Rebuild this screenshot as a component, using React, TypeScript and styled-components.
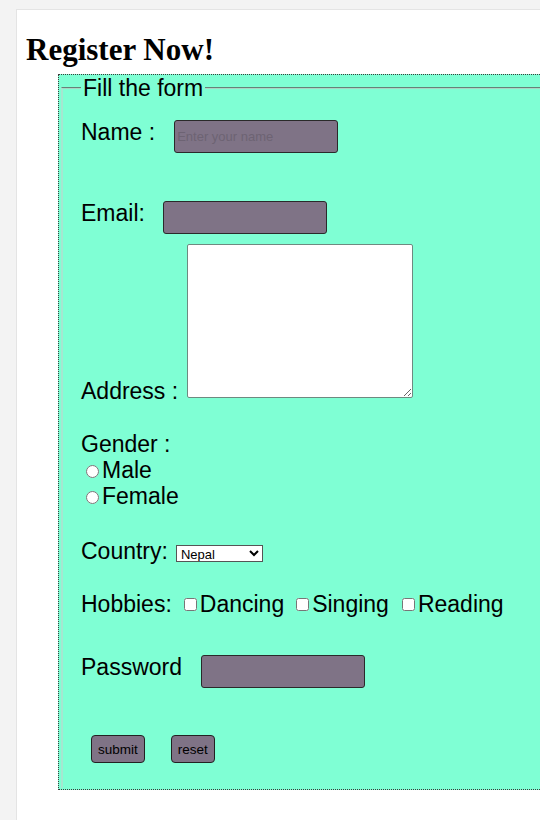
import React from "react";
import styled, { createGlobalStyle } from "styled-components";

const GlobalStyle = createGlobalStyle`
  html, body {
    margin: 0;
    padding: 0;
    overflow: hidden;
    background: #f3f3f3;
  }
`;

const Page = styled.div`
  padding: 9px 0 0 16px;
`;

const Card = styled.div`
  background: #ffffff;
  border-top: 1px solid #e4e4e4;
  border-left: 1px solid #e4e4e4;
  min-height: 900px;
  padding: 22px 0 0 9px;
`;

const Title = styled.h1`
  margin: 0;
  font-family: "Liberation Serif", "Times New Roman", serif;
  font-weight: bold;
  font-size: 31px;
  line-height: 36px;
  color: #000;
`;

const Form = styled.form`
  margin: 6px 0 0 32px;
  width: 540px;
  background: #7fffd4;
  border: 1px dotted #3a3a3a;
  font-family: "Liberation Sans", Arial, sans-serif;
  font-size: 23px;
  color: #000;
`;

const Fieldset = styled.fieldset`
  margin: 0 2px;
  border-style: solid;
  border-width: 2px;
  border-color: #95c9b7 #7fffd4 #7fffd4 #a6e6d0;
  border-top-style: groove;
  border-top-color: #a9d6c6;
  padding: 0 0 24px 18px;
  min-width: 0;
`;

const Legend = styled.legend`
  padding: 0 2px;
  line-height: 26px;
  font-size: 23px;
`;

const Row = styled.div<{ $mt: number; $align?: string }>`
  display: flex;
  align-items: ${(p) => p.$align ?? "flex-start"};
  margin-top: ${(p) => p.$mt}px;
`;

const Label = styled.label`
  line-height: 26px;
  white-space: nowrap;
`;

const TextInput = styled.input<{ $ml: number }>`
  box-sizing: border-box;
  width: 164px;
  height: 33px;
  margin: 1px 0 0 ${(p) => p.$ml}px;
  padding: 0 2px;
  background: #7f7386;
  border: 1px solid #2a2a2a;
  border-radius: 3px;
  font-family: "Liberation Sans", Arial, sans-serif;
  font-size: 13px;
  color: #000;
  &::placeholder {
    color: #6d6373;
  }
`;

const TextArea = styled.textarea`
  box-sizing: border-box;
  width: 226px;
  height: 154px;
  margin: 0 0 6px 9px;
  background: #ffffff;
  border: 1px solid #6e8a80;
  border-radius: 2px;
`;

const Stack = styled.div<{ $mt: number }>`
  display: flex;
  flex-direction: column;
  margin-top: ${(p) => p.$mt}px;
`;

const Option = styled.label`
  display: flex;
  align-items: center;
  line-height: 26px;
`;

const Radio = styled.input`
  width: 13px;
  height: 13px;
  margin: 2px 3px 0 5px;
`;

const Select = styled.select`
  box-sizing: border-box;
  width: 87px;
  height: 17px;
  margin: 7px 0 0 8px;
  padding: 0;
  font-family: "Liberation Sans", Arial, sans-serif;
  font-size: 13px;
  border: 1px solid #555;
  border-radius: 0;
  background: #fff;
`;

const Check = styled.label<{ $ml: number }>`
  display: flex;
  align-items: center;
  line-height: 26px;
  margin-left: ${(p) => p.$ml}px;
`;

const Checkbox = styled.input`
  width: 13px;
  height: 13px;
  margin: 1px 3px 0 0;
`;

const Button = styled.button<{ $ml: number }>`
  box-sizing: border-box;
  height: 28px;
  margin-left: ${(p) => p.$ml}px;
  padding: 0 6px;
  background: #7f7386;
  border: 1px solid #222;
  border-radius: 4px;
  font-family: "Liberation Sans", Arial, sans-serif;
  font-size: 13.5px;
  color: #000;
`;

export default function App() {
  return (
    <>
      <GlobalStyle />
      <Page>
        <Card>
          <Title>Register Now!</Title>
          <Form onSubmit={(e) => e.preventDefault()}>
            <Fieldset>
              <Legend>Fill the form</Legend>
              <Row $mt={18}>
                <Label>Name :</Label>
                <TextInput $ml={19} type="text" placeholder="Enter your name" />
              </Row>
              <Row $mt={47}>
                <Label>Email:</Label>
                <TextInput $ml={18} type="email" />
              </Row>
              <Row $mt={10} $align="flex-end">
                <Label>Address :</Label>
                <TextArea />
              </Row>
              <Stack $mt={27}>
                <Label>Gender :</Label>
                <Option>
                  <Radio type="radio" name="gender" />
                  Male
                </Option>
                <Option>
                  <Radio type="radio" name="gender" />
                  Female
                </Option>
              </Stack>
              <Row $mt={29}>
                <Label>Country:</Label>
                <Select defaultValue="Nepal">
                  <option>Nepal</option>
                  <option>India</option>
                  <option>China</option>
                </Select>
              </Row>
              <Row $mt={27}>
                <Label>Hobbies:</Label>
                <Check $ml={12}>
                  <Checkbox type="checkbox" />
                  Dancing
                </Check>
                <Check $ml={12}>
                  <Checkbox type="checkbox" />
                  Singing
                </Check>
                <Check $ml={13}>
                  <Checkbox type="checkbox" />
                  Reading
                </Check>
              </Row>
              <Row $mt={37}>
                <Label>Password</Label>
                <TextInput $ml={19} type="password" />
              </Row>
              <Row $mt={47}>
                <Button $ml={10} type="submit">submit</Button>
                <Button $ml={26} type="reset">reset</Button>
              </Row>
            </Fieldset>
          </Form>
        </Card>
      </Page>
    </>
  );
}
